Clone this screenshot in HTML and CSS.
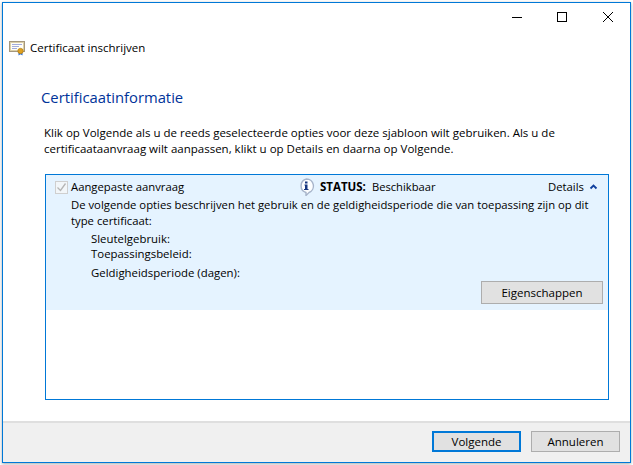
FILE: index.html
```html
<!DOCTYPE html>
<html lang="nl">
<head>
<meta charset="utf-8">
<title>Certificaat inschrijven</title>
<link rel="stylesheet" href="styles.css">
</head>
<body>
<div class="window">
  <div class="titlebar">
    <svg class="cap" width="46" height="30" viewBox="0 0 46 30"><path d="M20 14.500h10" stroke="#000" fill="none"/></svg>
    <svg class="cap" width="46" height="30" viewBox="0 0 46 30"><rect x="19.500" y="9.500" width="9" height="9" stroke="#000" fill="none"/></svg>
    <svg class="cap" width="46" height="30" viewBox="0 0 46 30"><path d="M19 9l10 10M29 9L19 19" stroke="#000" fill="none"/></svg>
  </div>
  <div class="appname">
    <svg class="certicon" width="17" height="16" viewBox="0 0 17 16">
      <rect x="0.5" y="1.5" width="15" height="10" fill="#fffdf6" stroke="#a5977c"/>
      <rect x="1.5" y="2.5" width="13" height="8" fill="none" stroke="#dccfa8"/>
      <path d="M3 4.500h10M3 6.500h7M3 8.500h5" stroke="#a3acdc" fill="none"/>
      <path d="M9.500 12l0 3.500 2-1.200 2 1.200 0-3.500z" fill="#2f6fd0"/>
      <circle cx="11.500" cy="11" r="2.700" fill="#e0a11f" stroke="#a9760f" stroke-width="0.600"/>
    </svg>
    <span>Certificaat inschrijven</span>
  </div>
  <main class="content">
    <h1 class="heading">Certificaatinformatie</h1>
    <p class="intro">Klik op Volgende als u de reeds geselecteerde opties voor deze sjabloon wilt gebruiken. Als u de certificaataanvraag wilt aanpassen, klikt u op Details en daarna op Volgende.</p>
    <section class="list">
      <div class="item">
        <div class="itemhead">
          <label class="check">
            <span class="box"><svg width="11" height="11" viewBox="0 0 11 11"><path d="M1.500 5.500l3 3 5-7" stroke="#b5b5b5" stroke-width="1.300" fill="none"/></svg></span>
            <span>Aangepaste aanvraag</span>
          </label>
          <div class="status">
            <svg class="infoicon" width="17" height="18" viewBox="0 0 17 18">
              <path d="M8.500 1a7 7 0 0 1 2.500 13.500L8 17.500v-3A7 7 0 0 1 8.500 1z" fill="#fdfeff" stroke="#a7b4ca" stroke-width="1.400"/>
              <path d="M7 3.500h2.500v2H7zM6.500 6.500h3v4.500h1v1h-4.500v-1h1v-3.500h-.5z" fill="#16357f"/>
            </svg>
            <b>STATUS:</b>
            <span class="state">Beschikbaar</span>
          </div>
          <div class="details">
            <span>Details</span>
            <svg width="9" height="6" viewBox="0 0 9 6"><path d="M1.500 4.500l3-3 3 3" stroke="#0f3f9e" stroke-width="1.800" fill="none"/></svg>
          </div>
        </div>
        <p class="desc">De volgende opties beschrijven het gebruik en de geldigheidsperiode die van toepassing zijn op dit type certificaat:</p>
        <div class="props">
          <div>Sleutelgebruik:</div>
          <div>Toepassingsbeleid:</div>
          <div class="validity">Geldigheidsperiode (dagen):</div>
        </div>
        <div class="actions"><button class="btn wide" type="button">Eigenschappen</button></div>
      </div>
    </section>
  </main>
  <footer class="footer">
    <button class="btn primary" type="button">Volgende</button>
    <button class="btn" type="button">Annuleren</button>
  </footer>
</div>
</body>
</html>
```
FILE: styles.css
```css
* { box-sizing: border-box; }
html, body { margin: 0; padding: 0; background: #fff; }
body {
  width: 633px;
  height: 465px;
  overflow: hidden;
  padding: 2px;
  font-family: "Open Sans", "Noto Sans", sans-serif;
  font-size: 11.500px;
  line-height: 16px;
  color: #000;
}
.window {
  width: 629px;
  height: 461px;
  border: 1px solid #0078d7;
  background: #fff;
  display: flex;
  flex-direction: column;
  box-shadow: 0 1px 3px rgba(0,0,0,.35);
}
.titlebar { display: flex; justify-content: flex-end; height: 30px; }
.cap { display: block; }
.appname {
  display: flex;
  align-items: center;
  gap: 4px;
  height: 16px;
  margin: 7px 0 0 6px;
}
.certicon { flex: none; }
.content { flex: 1; display: flex; flex-direction: column; padding: 0 21px 0 38px; }
.heading {
  margin: 30px 0 0;
  font-size: 14.800px;
  font-weight: 400;
  line-height: 22px;
  color: #003399;
}
.intro { margin: 17px 0 0 3px; width: 520px; }
.list {
  height: 226px;
  margin: 17px 0 0 4px;
  border: 1px solid #0078d7;
}
.item { height: 135px; background: #e5f3ff; padding: 4px 5px 0 9px; }
.itemhead { display: flex; align-items: center; height: 16px; }
.check { display: flex; align-items: center; gap: 3px; width: 243px; font-size: 11.300px; }
.box {
  width: 13px;
  height: 13px;
  border: 1px solid #cfcfcf;
  background: #f2f6f9;
  display: flex;
  align-items: center;
  justify-content: center;
}
.status { display: flex; align-items: center; gap: 3px; width: 250px; }
.status b { font-weight: 700; font-size: 11.500px; margin-right: 3px; }
.state { font-size: 11.200px; }
.infoicon { flex: none; margin-right: 2px; }
.details { display: flex; align-items: center; gap: 5px; font-size: 11.300px; }
.desc { margin: 2px 0 0 16px; width: 530px; font-size: 11.300px; }
.props { margin: 2px 0 0 36px; line-height: 15px; font-size: 11.400px; }
.validity { margin-top: 4px; }
.actions { display: flex; justify-content: flex-end; margin-top: 1px; }
.btn {
  width: 89px;
  height: 21px;
  padding: 0;
  border: 1px solid #adadad;
  background: #e1e1e1;
  font: inherit;
  line-height: 17px;
  color: #000;
}
.wide { width: 122px; height: 23px; }
.primary { border: 2px solid #0078d7; }
.footer {
  height: 41px;
  background: #f0f0f0;
  border-top: 2px solid #dfdfdf;
  display: flex;
  justify-content: flex-end;
  gap: 10px;
  padding: 8px 10px 0 0;
}
```
